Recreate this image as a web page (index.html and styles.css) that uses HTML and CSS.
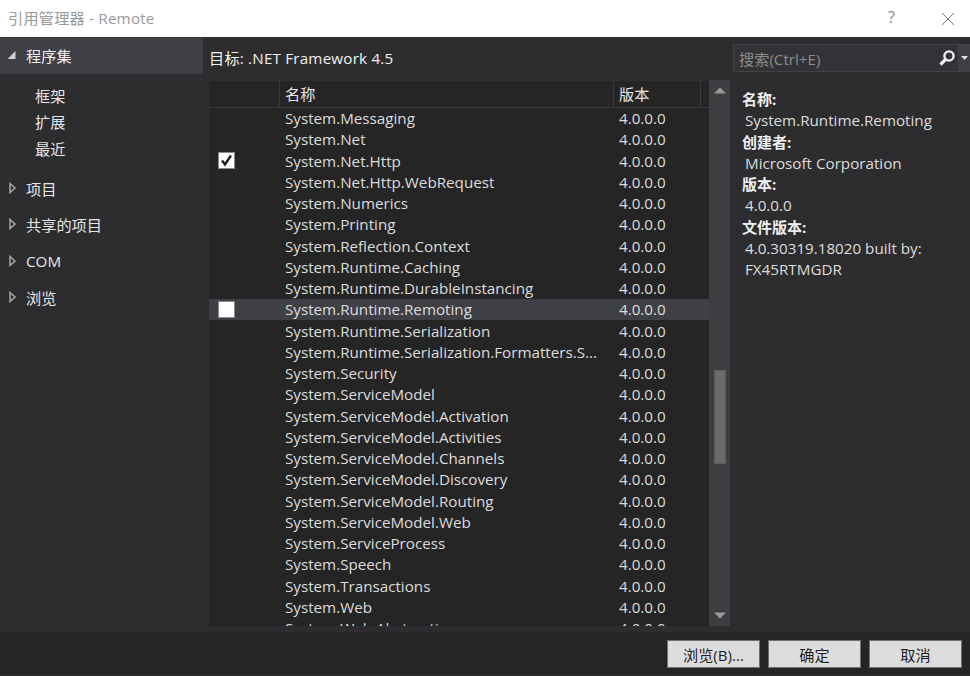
FILE: index.html
```html
<!DOCTYPE html>
<html lang="zh-CN">
<head>
    <meta charset="UTF-8">
    <title>引用管理器 - Remote</title>
    <link rel="stylesheet" href="styles.css">
</head>
<body>
    <header class="titlebar">
        <span class="title">引用管理器 - Remote</span>
        <span class="help">?</span>
        <svg class="close" width="14" height="14" viewBox="0 0 14 14"><path d="M1 1L13 13M13 1L1 13" stroke="#777" stroke-width="1" fill="none"/></svg>
    </header>

    <div class="main">
        <nav class="sidebar">
            <div class="nav-head selected">
                <svg class="arrow" width="10" height="10" viewBox="0 0 10 10"><path d="M0.5 9H8.5V1Z" fill="#d0d0d0"/></svg>
                <span>程序集</span>
            </div>
            <ul class="nav-sub">
                <li>框架</li>
                <li>扩展</li>
                <li>最近</li>
            </ul>
            <div class="nav-head">
                <svg class="arrow" width="10" height="12" viewBox="0 0 10 12"><path d="M3 1.5L8 6L3 10.5Z" fill="none" stroke="#a8a8a8" stroke-width="1.5"/></svg>
                <span>项目</span>
            </div>
            <div class="nav-head">
                <svg class="arrow" width="10" height="12" viewBox="0 0 10 12"><path d="M3 1.5L8 6L3 10.5Z" fill="none" stroke="#a8a8a8" stroke-width="1.5"/></svg>
                <span>共享的项目</span>
            </div>
            <div class="nav-head">
                <svg class="arrow" width="10" height="12" viewBox="0 0 10 12"><path d="M3 1.5L8 6L3 10.5Z" fill="none" stroke="#a8a8a8" stroke-width="1.5"/></svg>
                <span>COM</span>
            </div>
            <div class="nav-head">
                <svg class="arrow" width="10" height="12" viewBox="0 0 10 12"><path d="M3 1.5L8 6L3 10.5Z" fill="none" stroke="#a8a8a8" stroke-width="1.5"/></svg>
                <span>浏览</span>
            </div>
        </nav>

        <section class="center">
            <div class="target">目标: .NET Framework 4.5</div>
            <div class="list-wrap">
                <div class="list">
                    <div class="list-head">
                        <div class="col-check"></div>
                        <div class="col-name">名称</div>
                        <div class="col-version">版本</div>
                        <div class="col-rest"></div>
                    </div>
                    <div class="rows">
                        <div class="row"><div class="cell-check"></div><div class="cell-name">System.Messaging</div><div class="cell-version">4.0.0.0</div></div>
                        <div class="row"><div class="cell-check"></div><div class="cell-name">System.Net</div><div class="cell-version">4.0.0.0</div></div>
                        <div class="row"><div class="cell-check"><span class="checkbox"><svg width="15" height="15" viewBox="0 0 15 15"><path d="M3 7.5L6 11.5L12 2.5" fill="none" stroke="#1e1e1e" stroke-width="2.4"/></svg></span></div><div class="cell-name">System.Net.Http</div><div class="cell-version">4.0.0.0</div></div>
                        <div class="row"><div class="cell-check"></div><div class="cell-name">System.Net.Http.WebRequest</div><div class="cell-version">4.0.0.0</div></div>
                        <div class="row"><div class="cell-check"></div><div class="cell-name">System.Numerics</div><div class="cell-version">4.0.0.0</div></div>
                        <div class="row"><div class="cell-check"></div><div class="cell-name">System.Printing</div><div class="cell-version">4.0.0.0</div></div>
                        <div class="row"><div class="cell-check"></div><div class="cell-name">System.Reflection.Context</div><div class="cell-version">4.0.0.0</div></div>
                        <div class="row"><div class="cell-check"></div><div class="cell-name">System.Runtime.Caching</div><div class="cell-version">4.0.0.0</div></div>
                        <div class="row"><div class="cell-check"></div><div class="cell-name">System.Runtime.DurableInstancing</div><div class="cell-version">4.0.0.0</div></div>
                        <div class="row row-selected"><div class="cell-check"><span class="checkbox"></span></div><div class="cell-name">System.Runtime.Remoting</div><div class="cell-version">4.0.0.0</div></div>
                        <div class="row"><div class="cell-check"></div><div class="cell-name">System.Runtime.Serialization</div><div class="cell-version">4.0.0.0</div></div>
                        <div class="row"><div class="cell-check"></div><div class="cell-name">System.Runtime.Serialization.Formatters.S...</div><div class="cell-version">4.0.0.0</div></div>
                        <div class="row"><div class="cell-check"></div><div class="cell-name">System.Security</div><div class="cell-version">4.0.0.0</div></div>
                        <div class="row"><div class="cell-check"></div><div class="cell-name">System.ServiceModel</div><div class="cell-version">4.0.0.0</div></div>
                        <div class="row"><div class="cell-check"></div><div class="cell-name">System.ServiceModel.Activation</div><div class="cell-version">4.0.0.0</div></div>
                        <div class="row"><div class="cell-check"></div><div class="cell-name">System.ServiceModel.Activities</div><div class="cell-version">4.0.0.0</div></div>
                        <div class="row"><div class="cell-check"></div><div class="cell-name">System.ServiceModel.Channels</div><div class="cell-version">4.0.0.0</div></div>
                        <div class="row"><div class="cell-check"></div><div class="cell-name">System.ServiceModel.Discovery</div><div class="cell-version">4.0.0.0</div></div>
                        <div class="row"><div class="cell-check"></div><div class="cell-name">System.ServiceModel.Routing</div><div class="cell-version">4.0.0.0</div></div>
                        <div class="row"><div class="cell-check"></div><div class="cell-name">System.ServiceModel.Web</div><div class="cell-version">4.0.0.0</div></div>
                        <div class="row"><div class="cell-check"></div><div class="cell-name">System.ServiceProcess</div><div class="cell-version">4.0.0.0</div></div>
                        <div class="row"><div class="cell-check"></div><div class="cell-name">System.Speech</div><div class="cell-version">4.0.0.0</div></div>
                        <div class="row"><div class="cell-check"></div><div class="cell-name">System.Transactions</div><div class="cell-version">4.0.0.0</div></div>
                        <div class="row"><div class="cell-check"></div><div class="cell-name">System.Web</div><div class="cell-version">4.0.0.0</div></div>
                        <div class="row"><div class="cell-check"></div><div class="cell-name">System.Web.Abstractions</div><div class="cell-version">4.0.0.0</div></div>
                    </div>
                </div>
                <div class="scrollbar">
                    <svg class="scroll-btn" width="12" height="7" viewBox="0 0 12 7"><path d="M0 6.5L6 0.5L12 6.5Z" fill="#999"/></svg>
                    <div class="scroll-track"><div class="scroll-thumb"></div></div>
                    <svg class="scroll-btn" width="12" height="7" viewBox="0 0 12 7"><path d="M0 0.5L12 0.5L6 6.5Z" fill="#999"/></svg>
                </div>
            </div>
        </section>

        <aside class="details">
            <div class="search">
                <span class="search-text">搜索(Ctrl+E)</span>
                <svg class="search-icon" width="18" height="18" viewBox="0 0 18 18"><circle cx="11" cy="7" r="4.6" fill="none" stroke="#eee" stroke-width="2.4"/><path d="M7.5 10.5L2.5 15.5" stroke="#eee" stroke-width="3.2"/></svg>
                <span class="search-drop"><svg width="7" height="4" viewBox="0 0 7 4"><path d="M0 0H7L3.5 4Z" fill="#ddd"/></svg></span>
            </div>
            <dl class="info">
                <dt>名称:</dt>
                <dd>System.Runtime.Remoting</dd>
                <dt>创建者:</dt>
                <dd>Microsoft Corporation</dd>
                <dt>版本:</dt>
                <dd>4.0.0.0</dd>
                <dt>文件版本:</dt>
                <dd>4.0.30319.18020 built by:<br>FX45RTMGDR</dd>
            </dl>
        </aside>
    </div>

    <footer class="footer">
        <button class="btn">浏览(B)...</button>
        <button class="btn">确定</button>
        <button class="btn">取消</button>
    </footer>
</body>
</html>
```

FILE: styles.css
```css
* {
    box-sizing: border-box;
}

html, body {
    height: 100%;
}

body {
    margin: 0;
    display: flex;
    flex-direction: column;
    overflow: hidden;
    font-family: "Open Sans", "Noto Sans CJK SC", sans-serif;
    font-size: 15.2px;
    color: #e6e6e6;
    background-color: #2d2d30;
}

.titlebar {
    height: 37px;
    flex-shrink: 0;
    display: flex;
    align-items: center;
    padding: 0 0 3px 8px;
    background-color: #fff;
}

.title {
    flex: 1;
    color: #999;
    font-size: 15.2px;
    letter-spacing: 0.2px;
}

.help {
    width: 12px;
    margin-right: 41px;
    color: #888;
    font-size: 16px;
}

.close {
    margin: 3px 15px 0 0;
}

.main {
    flex: 1;
    min-height: 0;
    display: flex;
    border-top: 1px solid #333337;
}

/* left tree */
.sidebar {
    width: 203px;
    flex-shrink: 0;
    background-color: #2d2d30;
}

.nav-head {
    height: 36.5px;
    display: flex;
    align-items: center;
    gap: 9px;
    padding-left: 7px;
}

.nav-head.selected {
    height: 36px;
    padding-bottom: 2px;
    background-color: #3f3f46;
    color: #f1f1f1;
}

.arrow {
    width: 10px;
    flex-shrink: 0;
}

.nav-sub {
    list-style: none;
    margin: 8.5px 0 7.5px;
    padding: 0 0 0 35px;
}

.nav-sub li {
    height: 26.5px;
    line-height: 26.5px;
}

/* middle list */
.center {
    width: 527px;
    flex-shrink: 0;
    display: flex;
    flex-direction: column;
    padding-left: 6px;
}

.target {
    height: 42px;
    flex-shrink: 0;
    padding-top: 10px;
    line-height: 20px;
    letter-spacing: 0.2px;
    color: #f1f1f1;
}

.list-wrap {
    height: 546px;
    display: flex;
}

.list {
    width: 500px;
    overflow: hidden;
    background-color: #252526;
}

.list-head {
    height: 28px;
    display: flex;
    background-color: #252526;
    border-top: 1px solid #2f2f33;
    border-bottom: 1px solid #3a3a3e;
}

.list-head > div {
    line-height: 27px;
    padding-left: 5px;
    border-right: 1px solid #3a3a3e;
}

.col-check {
    width: 71px;
}

.col-name {
    width: 334px;
}

.col-version {
    width: 87px;
}

.col-rest {
    flex: 1;
    border-right: none !important;
}

.rows {
    margin-top: -0.5px;
}

.row {
    height: 21.26px;
    display: flex;
    align-items: center;
    color: #dcdcdc;
}

.row-selected {
    background-color: #3f3f46;
}

.cell-check {
    width: 71px;
    padding-left: 9px;
    display: flex;
    align-items: center;
}

.cell-name {
    width: 334px;
    padding-left: 5px;
    white-space: nowrap;
}

.cell-version {
    padding-left: 5px;
}

.checkbox {
    width: 17px;
    height: 17px;
    display: flex;
    align-items: center;
    justify-content: center;
    background-color: #fff;
    border: 1px solid #8a8a8a;
}

.scrollbar {
    width: 21px;
    display: flex;
    flex-direction: column;
    align-items: center;
    background-color: #3e3e42;
}

.scroll-btn {
    flex-shrink: 0;
    margin: 7px 0;
}

.scroll-track {
    flex: 1;
    width: 100%;
    padding-top: 269px;
    display: flex;
    justify-content: center;
}

.scroll-thumb {
    width: 12px;
    height: 94px;
    background-color: #6a6a6a;
    border: 1px solid #5c5c5c;
}

/* right panel */
.details {
    flex: 1;
    padding-top: 6px;
    background-color: #2d2d30;
}

.search {
    height: 28px;
    margin-left: 3px;
    display: flex;
    align-items: center;
    padding-left: 5px;
    background-color: #333337;
    border: 1px solid #434346;
    border-right: none;
}

.search-text {
    flex: 1;
    color: #8c8c8c;
}

.search-icon {
    margin-right: 2px;
}

.search-drop {
    width: 12px;
    height: 100%;
    display: flex;
    align-items: center;
    justify-content: center;
    background-color: #3f3f46;
}

.info {
    margin: 17px 0 0;
    padding-left: 12px;
    line-height: 21.3px;
}

.info dt {
    font-weight: 700;
    font-size: 15px;
    color: #f1f1f1;
}

.info dd {
    margin: 0 0 0 3px;
    color: #dcdcdc;
}

/* bottom buttons */
.footer {
    height: 44px;
    flex-shrink: 0;
    display: flex;
    justify-content: flex-end;
    gap: 8px;
    padding: 8px 8px 7px 0;
    background-color: #252526;
    border-bottom: 1px solid #2d2d30;
}

.btn {
    width: 93px;
    height: 28px;
    padding: 0;
    font-family: inherit;
    font-size: 15.2px;
    color: #1e1e1e;
    background-color: #dddddd;
    border: 1px solid #707070;
}
```
